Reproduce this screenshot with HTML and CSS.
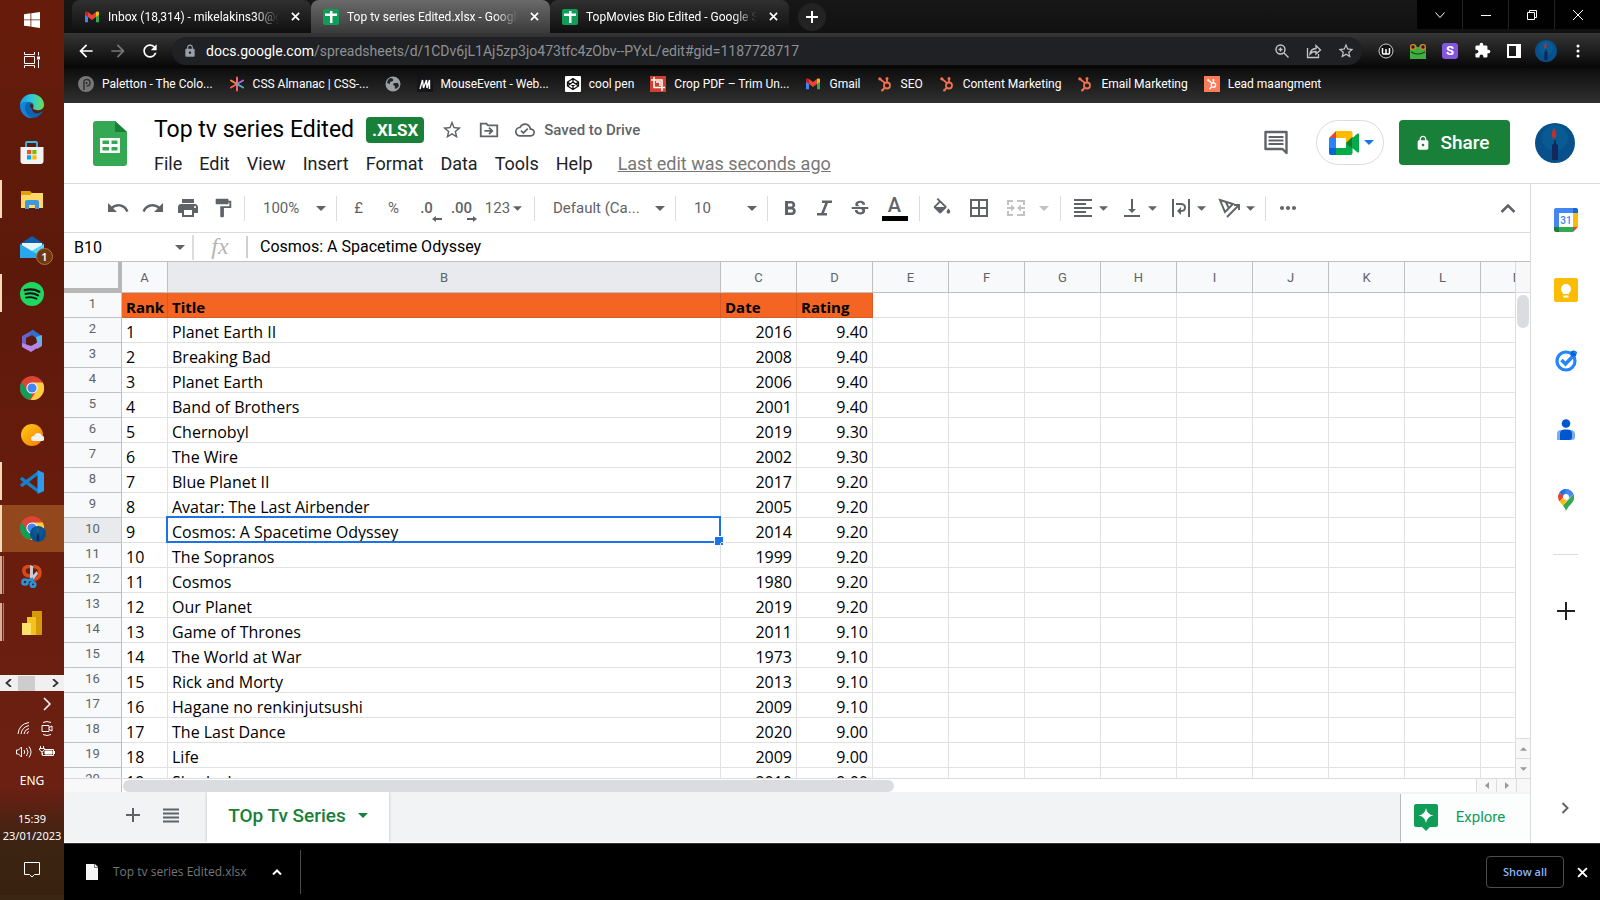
FILE: index.html
```html
<!DOCTYPE html>
<html lang="en">
<head>
<meta charset="utf-8">
<title>Top tv series Edited.xlsx - Google Sheets</title>
<link rel="stylesheet" href="styles.css">
</head>
<body>
<svg class="defs" aria-hidden="true">
  <defs>
    <symbol id="i-gmail" viewBox="0 0 16 16"><path fill="#4285f4" d="M1 4v9.2h3V7.5z"/><path fill="#34a853" d="M12 7.5v5.7h3V4z"/><path fill="#c5221f" d="M1 3.8C1 2.4 2.6 2 3.6 2.8L4 3.1v5L1 5.8z"/><path fill="#ea4335" d="M4 3.1l4 3 4-3v5l-4 3-4-3z"/><path fill="#fbbc04" d="M12 3.1l.4-.3C13.400 2 15 2.400 15 3.800v2L12 8.100z"/></symbol>
    <symbol id="i-sheet" viewBox="0 0 16 16"><rect width="16" height="16" rx="2" fill="#0f9d58"/><path fill="#fff" d="M2 4.500h5V2h2.500v2.500H14V7H9.500v7H7V7H2z"/></symbol>
    <symbol id="i-hub" viewBox="0 0 16 16"><g fill="none" stroke="currentColor" stroke-width="1.800"><circle cx="10" cy="9.500" r="3"/><path d="M10 6.500V2.500M8 7L3 3M8 11.500L5.500 14"/></g><g fill="currentColor"><circle cx="10" cy="2.500" r="1.500"/><circle cx="2.800" cy="2.800" r="1.600"/><circle cx="5.300" cy="14.200" r="1.200"/></g></symbol>
    <symbol id="i-caret" viewBox="0 0 10 5"><path fill="currentColor" d="M0 0h10L5 5z"/></symbol>
    <symbol id="i-x" viewBox="0 0 10 10"><path fill="none" stroke="currentColor" stroke-width="1.800" d="M1 1l8 8M9 1L1 9"/></symbol>
    <symbol id="i-avatar" viewBox="0 0 40 40"><circle cx="20" cy="20" r="20" fill="#07508c"/><circle cx="20" cy="15" r="13" fill="#0a6499" opacity=".5"/><path fill="#12275a" d="M17 22q3-3 6 0v15h-6z"/><path stroke="#0b1526" stroke-width="1" d="M20 17v4"/><path fill="#c22d2d" d="M19 5q-4 6-1 11 4-1 3-5 0-4-2-6z"/></symbol>
    <symbol id="i-chrome" viewBox="0 0 24 24"><circle cx="12" cy="12" r="12" fill="#db4437"/><path fill="#0f9d58" d="M1.600 6L7.200 15 12 18l-2 5.800A12 12 0 0 1 1.600 6z"/><path fill="#ffcd40" d="M12 6.500h10.700A12 12 0 0 1 10.500 24L17 14z"/><circle cx="12" cy="12" r="5.600" fill="#fff"/><circle cx="12" cy="12" r="4.600" fill="#4285f4"/></symbol>
    <symbol id="i-star" viewBox="0 0 24 24"><path fill="currentColor" d="M22 9.240l-7.190-.62L12 2 9.190 8.630 2 9.240l5.460 4.730L5.820 21 12 17.270 18.180 21l-1.630-7.030L22 9.240zM12 15.400l-3.760 2.270 1-4.280-3.320-2.880 4.380-.38L12 6.100l1.710 4.040 4.380.38-3.320 2.880 1 4.280L12 15.400z"/></symbol>
    <symbol id="i-lock" viewBox="0 0 24 24"><path fill="currentColor" d="M18 8h-1V6c0-2.760-2.240-5-5-5S7 3.240 7 6v2H6c-1.100 0-2 .9-2 2v10c0 1.100.9 2 2 2h12c1.100 0 2-.9 2-2V10c0-1.100-.9-2-2-2zm-6 9c-1.100 0-2-.9-2-2s.9-2 2-2 2 .9 2 2-.9 2-2 2zm3.100-9H8.900V6c0-1.710 1.390-3.100 3.100-3.100s3.100 1.390 3.100 3.100v2z"/></symbol>
  </defs>
</svg>

<div class="desktop">
  <aside class="taskbar">
    <button class="task start" aria-label="Start"><svg width="16" height="16" viewBox="0 0 16 16"><path fill="#fff" d="M0 2.200L6.500 1.300v6.200H0zM7.300 1.200L16 0v7.500H7.300zM0 8.300h6.500v6.200L0 13.700zM7.300 8.300H16V16l-8.700-1.200z"/></svg></button>
    <button class="task view" aria-label="Task view"><svg width="16" height="16" viewBox="0 0 16 16"><path fill="none" stroke="#fff" d="M.5 0v2.500h10V0M.5 16v-2.500h10V16M.5 4.500h10v7H.5zM14.500 0v3.500M14.500 8v8"/><path fill="#fff" d="M13 4.500h3v3h-3z"/></svg></button>
    <button class="task" aria-label="Edge"><svg width="24" height="24" viewBox="0 0 24 24"><defs><linearGradient id="e1" x1="0" x2="1"><stop offset="0" stop-color="#1b9de2"/><stop offset=".5" stop-color="#30c8d8"/><stop offset="1" stop-color="#6be04c"/></linearGradient></defs><circle cx="12" cy="12" r="12" fill="#0c64b4"/><path fill="url(#e1)" d="M0 11C1 4 6 0 12 0c7 0 12 5 12 11 0 4-3 6-7 6-3 0-5-1-4-3 2-4-1-6-4-6-4 0-7 1-9 3z"/><path fill="#1584d6" d="M0 11c2-3 5-4 8-3-3 2-4 6-2 10 1 3 3 5 7 6C6 25 0 19 0 11z"/><path fill="#5a1b0c" d="M12 15c0 3 3 5 7 4l4-2q1-2 1-5c-1 4-5 5-8 4-2-.5-3-1-3-2 1-2 0-4-2-4-2 1-1 3 1 5z"/></svg></button>
    <button class="task" aria-label="Microsoft Store"><svg width="24" height="24" viewBox="0 0 24 24"><path fill="none" stroke="#35bde8" stroke-width="1.800" d="M6 6V2q0-1 1-1h9q1 0 1 1v4"/><path fill="#f2f2f2" d="M.5 6h23v14q0 3-3 3h-17q-3 0-3-3z"/><path fill="#f25022" d="M7 9h4.200v4.200H7z"/><path fill="#7fba00" d="M12.300 9h4.200v4.200h-4.200z"/><path fill="#00a4ef" d="M7 14.300h4.200v4.200H7z"/><path fill="#ffb900" d="M12.300 14.300h4.200v4.200h-4.200z"/></svg></button>
    <button class="task open" aria-label="File Explorer"><svg width="22" height="20" viewBox="0 0 22 20"><path fill="#e0a010" d="M0 1h9l2 2h11v4H0z"/><path fill="#ffd867" d="M0 5h9l2-2h11v15H0z"/><path fill="#3f97dc" d="M4 19v-7q0-2 2-2h10q2 0 2 2v7h-4v-4H8v4z"/></svg></button>
    <button class="task" aria-label="Mail, 1 new"><svg width="24" height="22" viewBox="0 0 24 22"><path fill="#0d5fb0" d="M0 8l12-8 12 8v4H0z"/><path fill="#e8f4fb" d="M2 7h20v8H2z"/><path fill="#28a8ea" d="M0 8l12 7 12-7v14H0z"/><path fill="#50d9ff" d="M24 8v14L9 13.500l3 1.500z"/></svg><span class="badge">1</span></button>
    <button class="task open" aria-label="Spotify"><svg width="24" height="24" viewBox="0 0 24 24"><circle cx="12" cy="12" r="12" fill="#1ed760"/><g fill="none" stroke="#111" stroke-linecap="round"><path stroke-width="2.300" d="M4.800 8.200q8-2 14.500 1.500"/><path stroke-width="2" d="M5.500 12q7-1.800 12.500 1.400"/><path stroke-width="1.700" d="M6 15.600q6-1.400 10.500 1.200"/></g></svg></button>
    <button class="task" aria-label="Microsoft 365"><svg width="22" height="24" viewBox="0 0 22 24"><path fill="#6a62cf" d="M12 1L1 7v11l4-2V9l10-5z"/><path fill="#2f6fd0" d="M12 1l9 6v4l-6-2-4-3-3 1 2-5z"/><path fill="#52b8ee" d="M15 8l6-2v11l-5 3v-7z"/><path fill="#b387e8" d="M1 14l9 3 7-4 4 3-11 7-9-5z"/><path fill="#5a1b0c" d="M11 8l4 2.500v3.500L11 16l-3-2v-4z"/></svg></button>
    <button class="task" aria-label="Chrome"><svg width="24" height="24"><use href="#i-chrome"/></svg></button>
    <button class="task" aria-label="Weather"><svg width="24" height="24" viewBox="0 0 24 24"><defs><linearGradient id="w1" x2="1" y2="1"><stop stop-color="#ffca18"/><stop offset="1" stop-color="#f57c00"/></linearGradient></defs><circle cx="12" cy="12" r="11" fill="url(#w1)"/><path fill="#eef1f5" d="M14 18q-3 0-3-2.500t3-2.500q1-3 4-3t4 3q3 .5 3 2.500T22 18z"/></svg></button>
    <button class="task open" aria-label="Visual Studio Code"><svg width="24" height="24" viewBox="0 0 24 24"><path fill="none" stroke="#1580cc" stroke-width="3.400" d="M1 8l17 13M1 16L18 3"/><path fill="#2a9df0" d="M17.500 0L24 3v18l-6.500 3z"/></svg></button>
    <button class="task open active" aria-label="Chrome, current profile"><svg width="28" height="28" viewBox="0 0 28 28"><svg width="24" height="24" x="2" y="1"><use href="#i-chrome"/></svg><svg width="16" height="16" x="12" y="11"><use href="#i-avatar"/></svg></svg></button>
    <button class="task open multi" aria-label="Snip"><svg width="22" height="24" viewBox="0 0 22 24"><path fill="none" stroke="#d84a1b" stroke-width="3.500" d="M9 2.500Q2 2 3 8q1 4 7 4M12 2.500q7 0 7 6t-6 7"/><path fill="#c9cdd2" d="M9 1l3 1v9l4-4 1 3-5 6-3-1z"/><g fill="none" stroke="#2795e0" stroke-width="2.500"><circle cx="4" cy="18" r="2.600"/><circle cx="12" cy="20.500" r="2.300"/><path d="M6 17l5-2 1 3"/></g></svg></button>
    <button class="task open multi" aria-label="Power BI"><svg width="20" height="24" viewBox="0 0 20 24"><path fill="#d69a08" d="M10 0h10v24H10z"/><path fill="#f2c21f" d="M5 6h9v18H5z"/><path fill="#fbe06a" d="M0 12h9v12H0z"/></svg></button>
    <div class="task-scroll"><svg width="7" height="8" viewBox="0 0 7 8"><path fill="none" stroke="#333" stroke-width="1.800" d="M6 0L1.500 4 6 8"/></svg><i></i><svg width="7" height="8" viewBox="0 0 7 8"><path fill="none" stroke="#333" stroke-width="1.800" d="M1 0l4.500 4L1 8"/></svg></div>
    <div class="tray">
      <svg width="16" height="16" viewBox="0 0 16 16" class="tray-more"><path d="M5 2l6 6-6 6"/></svg>
      <svg width="16" height="16" viewBox="0 0 16 16"><path d="M2 14Q3 4 13 2.500M5 14q1-7 8-8.500M8 14q.5-4.500 5-5.500M11 14q0-2 2-2.500"/></svg>
      <svg width="16" height="16" viewBox="0 0 16 16"><path d="M3 5.500h7v6H3zM10 7.500l3-1.500v5l-3-1.500M4 2.500q4-2 8 0M4 14.500q4 2 8 0"/></svg>
      <svg width="16" height="16" viewBox="0 0 16 16"><path d="M.5 6h2l3-3v10l-3-3h-2zM8 6q1.500 2 0 4M10.500 4q3 4 0 8M13 2.500q4 5.500 0 11"/></svg>
      <svg width="16" height="16" viewBox="0 0 16 16"><path d="M5.500 5.500h9v6h-11V9M15.500 7v3M1.500 2v2M4.500 2v2M.5 4.500h5V6L3 8 .5 6zM3 8v3"/><path d="M6 7h7v3H6z" fill="#fff"/></svg>
    </div>
    <div class="lang">ENG</div>
    <div class="clock">15:39<br>23/01/2023</div>
    <button class="notes" aria-label="Notifications"><svg width="16" height="16" viewBox="0 0 16 16"><path fill="none" stroke="#fff" d="M.5.500h15v12h-5L8 15l-2.500-2.500h-5z"/></svg></button>
  </aside>

  <main class="window">
    <header class="tabstrip">
      <div class="tab"><svg width="16" height="16"><use href="#i-gmail"/></svg><span>Inbox (18,314) - mikelakins30@g</span><button aria-label="Close tab"><svg width="9" height="9"><use href="#i-x"/></svg></button></div>
      <div class="tab current"><svg width="16" height="16"><use href="#i-sheet"/></svg><span>Top tv series Edited.xlsx - Google</span><button aria-label="Close tab"><svg width="9" height="9"><use href="#i-x"/></svg></button></div>
      <div class="tab"><svg width="16" height="16"><use href="#i-sheet"/></svg><span>TopMovies Bio Edited - Google S</span><button aria-label="Close tab"><svg width="9" height="9"><use href="#i-x"/></svg></button></div>
      <button class="newtab" aria-label="New tab"><svg width="12" height="12" viewBox="0 0 12 12"><path stroke="#fff" stroke-width="2" d="M6 0v12M0 6h12"/></svg></button>
      <div class="winbtns">
        <button aria-label="Search tabs"><svg width="10" height="10" viewBox="0 0 10 10"><path d="M.5 2.500L5 7.500l4.500-5"/></svg></button>
        <button aria-label="Minimise"><svg width="10" height="10" viewBox="0 0 10 10"><path d="M0 5.500h10"/></svg></button>
        <button aria-label="Restore"><svg width="10" height="10" viewBox="0 0 10 10"><path d="M.5 2.500h7v7h-7zM2.500 2.500v-2h7v7h-2"/></svg></button>
        <button aria-label="Close"><svg width="10" height="10" viewBox="0 0 10 10"><path d="M0 0l10 10M10 0L0 10"/></svg></button>
      </div>
    </header>

    <div class="navbar">
      <button aria-label="Back"><svg width="20" height="20" viewBox="0 0 24 24"><path fill="#fff" d="M20 11H7.830l5.590-5.590L12 4l-8 8 8 8 1.410-1.410L7.830 13H20v-2z"/></svg></button>
      <button aria-label="Forward"><svg width="20" height="20" viewBox="0 0 24 24"><path fill="#777" d="M4 11h12.170l-5.590-5.590L12 4l8 8-8 8-1.410-1.410L16.170 13H4v-2z"/></svg></button>
      <button aria-label="Reload"><svg width="20" height="20" viewBox="0 0 24 24"><path fill="#fff" d="M17.650 6.350C16.200 4.900 14.210 4 12 4c-4.420 0-7.990 3.580-7.990 8s3.570 8 7.990 8c3.730 0 6.840-2.550 7.730-6h-2.080c-.82 2.330-3.040 4-5.650 4-3.310 0-6-2.690-6-6s2.690-6 6-6c1.660 0 3.140.69 4.220 1.780L13 11h7V4l-2.350 2.350z"/></svg></button>
      <div class="omnibox">
        <svg class="dim" width="14" height="14"><use href="#i-lock"/></svg>
        <span class="url"><b>docs.google.com</b>/spreadsheets/d/1CDv6jL1Aj5zp3jo473tfc4zObv--PYxL/edit#gid=1187728717</span>
        <button aria-label="Zoom"><svg width="16" height="16" viewBox="0 0 16 16"><g fill="none" stroke="#c4c7cb" stroke-width="1.400"><circle cx="6.500" cy="6.500" r="4.500"/><path d="M10 10l4.500 4.500M4.500 6.500h4M6.500 4.500v4"/></g></svg></button>
        <button aria-label="Share"><svg width="16" height="16" viewBox="0 0 16 16"><g fill="none" stroke="#c4c7cb" stroke-width="1.300"><path d="M1.500 5v9.500h11V11M4 11q.5-5 6-5.500V2.500L14.500 7 10 11V8.500q-4 0-6 2.500z"/></g></svg></button>
        <button aria-label="Bookmark"><svg width="18" height="18" class="pale"><use href="#i-star"/></svg></button>
      </div>
      <div class="exts">
        <button aria-label="Wordtune"><svg width="16" height="16" viewBox="0 0 16 16"><circle cx="8" cy="8" r="7" fill="#111" stroke="#ccc"/><path fill="none" stroke="#fff" stroke-width="1.500" d="M4.500 5v5q0 1 1 1H7q1 0 1-1V6v4q0 1 1 1h1.500q1 0 1-1V5"/></svg></button>
        <button aria-label="Frog"><svg width="18" height="16" viewBox="0 0 18 16"><path fill="#3fae3f" d="M1 5q0-3 3-4 3 0 4 3h2q1-3 4-3 3 1 3 4v11H1z"/><circle cx="4" cy="4" r="3" fill="#e57f2b"/><circle cx="14" cy="4" r="3" fill="#e57f2b"/><circle cx="4" cy="4" r="1.700" fill="#3a1410"/><circle cx="14" cy="4" r="1.700" fill="#3a1410"/><path fill="none" stroke="#17401c" stroke-width="1.200" d="M2 9q7 4 14 0"/></svg></button>
        <button aria-label="Stylus"><span class="ext-s">S</span></button>
        <button aria-label="Extensions"><svg width="17" height="17" viewBox="0 0 24 24"><path fill="#fff" d="M20.500 11H19V7c0-1.100-.9-2-2-2h-4V3.500C13 2.120 11.880 1 10.500 1S8 2.120 8 3.500V5H4c-1.100 0-1.990.9-1.990 2v3.800H3.500c1.490 0 2.700 1.210 2.700 2.700s-1.210 2.700-2.700 2.700H2V20c0 1.100.9 2 2 2h3.800v-1.500c0-1.490 1.210-2.700 2.700-2.700s2.700 1.210 2.700 2.700V22H17c1.100 0 2-.9 2-2v-4h1.500c1.380 0 2.500-1.120 2.500-2.500S21.880 11 20.500 11z"/></svg></button>
        <button aria-label="Side panel"><svg width="14" height="14" viewBox="0 0 14 14"><path fill="#fff" fill-rule="evenodd" d="M0 0h14v14H0zM2 2v10h7V2z"/></svg></button>
        <button aria-label="Profile"><svg width="22" height="22"><use href="#i-avatar"/></svg></button>
        <button aria-label="Menu"><svg width="16" height="16" viewBox="0 0 16 16" fill="#fff"><circle cx="8" cy="3" r="1.500"/><circle cx="8" cy="8" r="1.500"/><circle cx="8" cy="13" r="1.500"/></svg></button>
      </div>
    </div>

    <nav class="bookmarks">
      <a href="#"><svg width="16" height="16" viewBox="0 0 16 16"><circle cx="8" cy="8" r="8" fill="#777"/><path fill="none" stroke="#333" stroke-width="1.500" d="M6 14V8q-1-4 2.500-4.500T12 7q0 3-3.500 3"/><circle cx="8.500" cy="7" r="1" fill="#222"/></svg>Paletton - The Colo...</a>
      <a href="#"><svg width="16" height="16" viewBox="0 0 16 16"><g stroke-width="2" stroke-linecap="round"><path stroke="#f0626c" d="M8 1.500v13"/><path stroke="#ff8a3d" d="M2 4.500L8 8"/><path stroke="#b06ad8" d="M14 4.500L8 8"/><path stroke="#ff5c5c" d="M2 11.500L8 8"/><path stroke="#4cb5c9" d="M14 11.500L8 8"/></g></svg>CSS Almanac | CSS-...</a>
      <a href="#" aria-label="Site"><svg width="16" height="16" viewBox="0 0 16 16"><circle cx="8" cy="8" r="7.500" fill="#9aa0a6"/><path fill="#222" d="M5 2q4 0 3 3l-3 1v2l-3-1Q2 4 5 2zM9 7h4l1 3-3 3q-2-1-1-3l-2-1z"/></svg></a>
      <a href="#"><svg width="16" height="16" viewBox="0 0 16 16"><path fill="#15141a" d="M0 0h16v16H0z"/><path fill="none" stroke="#fff" stroke-width="1.400" d="M3 13L5.500 4l1 8L9.500 4l.5 8 2.500-8v9"/></svg>MouseEvent - Web...</a>
      <a href="#"><svg width="16" height="16" viewBox="0 0 16 16"><rect width="16" height="16" rx="1" fill="#fff"/><path fill="none" stroke="#111" stroke-width="1.300" d="M8 2.500l5.500 3.500v4L8 13.500 2.500 10V6zM2.500 6L8 10l5.500-4M2.500 10L8 6l5.500 4M8 2.500V6M8 10v3.500"/></svg>cool pen</a>
      <a href="#"><svg width="16" height="16" viewBox="0 0 16 16"><path fill="#d1402f" d="M0 0h16v16H0z"/><path fill="none" stroke="#fff" stroke-width="1.500" d="M4 1v10.500h7.500M1 4h11v11M13 11.500h2M6 6h4v4"/></svg>Crop PDF – Trim Un...</a>
      <a href="#"><svg width="16" height="16"><use href="#i-gmail"/></svg>Gmail</a>
      <a href="#"><svg class="hub" width="16" height="16"><use href="#i-hub"/></svg>SEO</a>
      <a href="#"><svg class="hub" width="16" height="16"><use href="#i-hub"/></svg>Content Marketing</a>
      <a href="#"><svg class="hub" width="16" height="16"><use href="#i-hub"/></svg>Email Marketing</a>
      <a href="#"><svg class="hub-box" width="16" height="16" viewBox="-3 -3 22 22"><use href="#i-hub" width="16" height="16"/></svg>Lead maangment</a>
    </nav>

    <div class="app">
      <header class="dochead">
        <svg class="logo" width="34" height="45" viewBox="0 0 34 45"><path fill="#34a853" d="M3 0h19l12 11v31q0 3-3 3H3q-3 0-3-3V3q0-3 3-3z"/><path fill="#188038" d="M22 0l12 11H22z"/><path fill="#fff" fill-rule="evenodd" d="M7 17h20v15H7zM9.500 19.500v3.500H16v-3.500zM18.500 19.500v3.500h6v-3.500zM9.500 26v3.500H16V26zM18.500 26v3.500h6V26z"/></svg>
        <div class="docinfo">
          <div class="titlerow">
            <h1>Top tv series Edited</h1><span class="xlsx">.XLSX</span>
            <button aria-label="Star"><svg width="22" height="22"><use href="#i-star"/></svg></button>
            <button aria-label="Move"><svg width="22" height="22" viewBox="0 0 24 24"><path fill="none" stroke="currentColor" stroke-width="2" d="M3 5h6l2 2h10v12H3zM7 13h8M12 9.500l3.500 3.500-3.500 3.500"/></svg></button>
            <button class="saved"><svg width="20" height="20" viewBox="0 0 24 24"><path fill="currentColor" d="M19.350 10.040C18.670 6.590 15.640 4 12 4 9.110 4 6.600 5.640 5.350 8.040 2.340 8.360 0 10.910 0 14c0 3.310 2.690 6 6 6h13c2.760 0 5-2.240 5-5 0-2.640-2.050-4.780-4.650-4.960zM19 18H6c-2.210 0-4-1.790-4-4 0-2.050 1.530-3.760 3.560-3.970l1.070-.11.5-.95C8.080 7.140 9.940 6 12 6c2.620 0 4.880 1.860 5.390 4.430l.3 1.500 1.530.11c1.560.1 2.780 1.410 2.780 2.960 0 1.650-1.350 3-3 3zm-9-3.820l-2.090-2.090L6.500 13.500 10 17l6.010-6.010-1.410-1.410z"/></svg>Saved to Drive</button>
          </div>
          <nav class="menus"><button>File</button><button>Edit</button><button>View</button><button>Insert</button><button>Format</button><button>Data</button><button>Tools</button><button>Help</button><a href="#">Last edit was seconds ago</a></nav>
        </div>
        <div class="actions">
          <button class="comments" aria-label="Comments"><svg width="26" height="26" viewBox="0 0 26 26"><path fill="none" stroke="currentColor" stroke-width="2.400" stroke-linejoin="round" d="M2.500 2h21v21l-4-4h-17z"/><path stroke="currentColor" stroke-width="2" d="M5.500 7h15M5.500 10.500h15M5.500 14h15"/></svg></button>
          <button class="meet" aria-label="Join a call"><svg width="30" height="24" viewBox="0 0 30 24"><path fill="#ea4335" d="M7 0v7H0z"/><path fill="#ffba00" d="M7 0h14.500q2 0 2 2v6L17 12V7H7z"/><path fill="#2684fc" d="M0 7h7v10H0z"/><path fill="#0066da" d="M0 17h7v7H2q-2 0-2-2z"/><path fill="#00ac47" d="M7 17h10v-5l6.500-6V22q0 2-2 2H7z"/><path fill="#00ac47" d="M23.500 7l5-4.500q1.500-.5 1.500 1v17q0 1.500-1.500 1l-5-4.500z"/><path fill="#00832d" d="M17 12l6.500-6v12z"/></svg><svg class="meet-caret" width="10" height="5"><use href="#i-caret"/></svg></button>
          <button class="share"><svg width="16" height="16"><use href="#i-lock"/></svg>Share</button>
          <button class="account" aria-label="Account"><svg width="40" height="40"><use href="#i-avatar"/></svg></button>
        </div>
      </header>

      <div class="workspace">
        <section class="editor">
          <div class="toolbar">
            <div class="group">
              <button aria-label="Undo"><svg width="24" height="24" viewBox="0 0 24 24"><path d="M12.500 8c-2.650 0-5.050.99-6.900 2.600L2 7v9h9l-3.620-3.620c1.390-1.160 3.160-1.880 5.120-1.880 3.540 0 6.550 2.310 7.600 5.500l2.370-.78C21.080 11.030 17.150 8 12.500 8z"/></svg></button>
              <button aria-label="Redo"><svg width="24" height="24" viewBox="0 0 24 24"><path d="M18.400 10.600C16.550 8.990 14.150 8 11.500 8c-4.650 0-8.580 3.030-9.960 7.220L3.900 16c1.050-3.190 4.050-5.500 7.600-5.500 1.950 0 3.730.72 5.120 1.880L13 16h9V7l-3.600 3.600z"/></svg></button>
              <button aria-label="Print"><svg width="24" height="24" viewBox="0 0 24 24"><path d="M19 8H5c-1.660 0-3 1.340-3 3v6h4v4h12v-4h4v-6c0-1.660-1.340-3-3-3zm-3 11H8v-5h8v5zm3-7c-.55 0-1-.45-1-1s.45-1 1-1 1 .45 1 1-.45 1-1 1zm-1-9H6v4h12V3z"/></svg></button>
              <button aria-label="Paint format"><svg width="22" height="22" viewBox="0 0 24 24"><path d="M18 4V3c0-.55-.45-1-1-1H5c-.55 0-1 .45-1 1v4c0 .55.450 1 1 1h12c.55 0 1-.45 1-1V6h1v4H9v11c0 .55.450 1 1 1h2c.55 0 1-.45 1-1v-9h8V4h-3z"/></svg></button>
            </div>
            <div class="group"><button class="drop zoom">100%<svg width="10" height="5"><use href="#i-caret"/></svg></button></div>
            <div class="group">
              <button>£</button><button>%</button>
              <button aria-label="Decrease decimals" class="dec">.0<svg width="10" height="6" viewBox="0 0 10 6"><path d="M0 3l4-3v2h6v2H4v2z"/></svg></button>
              <button aria-label="Increase decimals" class="dec">.00<svg width="10" height="6" viewBox="0 0 10 6"><path d="M10 3L6 0v2H0v2h6v2z"/></svg></button>
              <button class="pair num-format">123<svg width="9" height="5"><use href="#i-caret"/></svg></button>
            </div>
            <div class="group"><button class="drop font">Default (Ca...<svg width="10" height="5"><use href="#i-caret"/></svg></button></div>
            <div class="group"><button class="drop zoom">10<svg width="10" height="5"><use href="#i-caret"/></svg></button></div>
            <div class="group wide">
              <button aria-label="Bold"><svg width="24" height="24" viewBox="0 0 24 24"><path d="M15.600 11.790c.97-.67 1.650-1.770 1.650-2.790 0-2.260-1.750-4-4-4H7v14h7.040c2.090 0 3.710-1.700 3.710-3.790 0-1.520-.86-2.820-2.150-3.420zM10 7.500h3c.83 0 1.500.67 1.500 1.500s-.67 1.500-1.500 1.500h-3v-3zm3.500 9H10v-3h3.500c.83 0 1.500.67 1.500 1.500s-.67 1.500-1.500 1.500z"/></svg></button>
              <button aria-label="Italic"><svg width="24" height="24" viewBox="0 0 24 24"><path d="M9 4.500V7h3.200l-4 10H4v2.500h10V17h-3l4-10h4V4.500z"/></svg></button>
              <button aria-label="Strikethrough"><svg width="22" height="22" viewBox="0 0 24 24"><path d="M6.850 8.080C6.850 5.370 9.450 4 12.240 4c1.640 0 3 .49 3.900 1.280.77.65 1.460 1.730 1.460 3.240h-3.010c0-.31-.05-.59-.15-.85-.29-.86-1.200-1.280-2.250-1.280-1.860 0-2.340 1.020-2.340 1.700 0 .48.250.88.740 1.210.38.250.77.480 1.410.700H7.390c-.21-.34-.54-.89-.54-1.920zM21 13v-2H3v2h9.620c1.150.45 1.960.75 1.960 1.970 0 1-.81 1.670-2.280 1.670-1.540 0-2.930-.54-2.930-2.510H6.400c0 .55.080 1.130.240 1.580.81 2.290 3.290 3.300 5.670 3.300 2.270 0 5.300-.89 5.300-4.050 0-.3-.01-1.160-.48-1.940H21V13z"/></svg></button>
              <button class="textcolor" aria-label="Text colour"><span>A</span></button>
            </div>
            <div class="group fill">
              <button aria-label="Fill colour"><svg width="22" height="22" viewBox="0 0 24 24"><path d="M16.560 9.940L7.620 1 6.210 2.410l2.380 2.380-5.150 5.150c-.59.59-.59 1.540 0 2.120l5.500 5.500c.29.290.68.440 1.060.440s.77-.15 1.060-.44l5.500-5.500c.59-.58.59-1.530 0-2.120zM5.210 11L10 6.210 14.790 11H5.210zM19 12.500s-2 2.170-2 3.500c0 1.100.9 2 2 2s2-.9 2-2c0-1.330-2-3.500-2-3.500z"/></svg></button>
              <button aria-label="Borders"><svg width="24" height="24" viewBox="0 0 24 24"><path d="M3 3v18h18V3H3zm8 16H5v-6h6v6zm0-8H5V5h6v6zm8 8h-6v-6h6v6zm0-8h-6V5h6v6z"/></svg></button>
              <button class="off" aria-label="Merge cells"><svg width="24" height="24" viewBox="0 0 24 24"><path d="M3 4h6v2H5v3H3zM21 4h-8v2h6v3h2zM3 20h6v-2H5v-3H3zM21 20h-8v-2h6v-3h2zM3 11h4V8.500l4 3.500-4 3.500V13H3zM21 11h-4V8.500L13 12l4 3.500V13h4z"/></svg></button>
              <button class="off thin" aria-label="Merge type"><svg width="10" height="5"><use href="#i-caret"/></svg></button>
            </div>
            <div class="group pairs">
              <button class="pair" aria-label="Horizontal align"><svg width="24" height="24" viewBox="0 0 24 24"><path d="M15 15H3v2h12v-2zm0-8H3v2h12V7zM3 13h18v-2H3v2zm0 8h18v-2H3v2zM3 3v2h18V3H3z"/></svg><svg width="9" height="5"><use href="#i-caret"/></svg></button>
              <button class="pair" aria-label="Vertical align"><svg width="24" height="24" viewBox="0 0 24 24"><path d="M16 13h-3V3h-2v10H8l4 4 4-4zM4 19v2h16v-2H4z"/></svg><svg width="9" height="5"><use href="#i-caret"/></svg></button>
              <button class="pair" aria-label="Text wrapping"><svg width="24" height="24" viewBox="0 0 24 24"><path d="M3 3h2v18H3zM19 3h2v18h-2zM7 7h5.500q4.500.5 4.500 4.500t-4.500 4.500H12v3l-4-4 4-4v3h.5q2.500 0 2.500-2.500T12.500 9H7z"/></svg><svg width="9" height="5"><use href="#i-caret"/></svg></button>
              <button class="pair" aria-label="Text rotation"><svg width="24" height="24" viewBox="0 0 24 24"><path fill="none" stroke="currentColor" stroke-width="1.900" d="M2 4l13 4-8 8zM7.500 5.500l3 6M9 21L21 9M21 14V9h-5"/></svg><svg width="9" height="5"><use href="#i-caret"/></svg></button>
            </div>
            <div class="group"><button aria-label="More"><svg width="18" height="6" viewBox="0 0 18 6"><circle cx="3" cy="3" r="2"/><circle cx="9" cy="3" r="2"/><circle cx="15" cy="3" r="2"/></svg></button></div>
            <button class="hide" aria-label="Hide menus"><svg width="16" height="10" viewBox="0 0 16 10"><path fill="none" stroke="currentColor" stroke-width="2.500" d="M1.500 9L8 2.500 14.500 9"/></svg></button>
          </div>

          <div class="formula">
            <button class="namebox">B10<svg width="10" height="5"><use href="#i-caret"/></svg></button>
            <span class="fx">fx</span>
            <input type="text" aria-label="Formula" value="Cosmos: A Spacetime Odyssey">
          </div>

          <div class="sheet">
            <div class="grid">
              <table>
                <colgroup id="cols"></colgroup>
                <thead><tr id="letters"></tr></thead>
                <tbody id="rows"></tbody>
              </table>
            </div>
            <div class="vscroll"><i class="corner"></i><i class="thumb"></i><button aria-label="Scroll up"><svg class="flip" width="7" height="4"><use href="#i-caret"/></svg></button><button aria-label="Scroll down"><svg width="7" height="4"><use href="#i-caret"/></svg></button></div>
          </div>
          <div class="hscroll"><div class="track"><i></i></div><button aria-label="Scroll left"><svg width="4" height="7" viewBox="0 0 4 7"><path fill="currentColor" d="M4 0v7L0 3.500z"/></svg></button><button aria-label="Scroll right"><svg width="4" height="7" viewBox="0 0 4 7"><path fill="currentColor" d="M0 0v7l4-3.500z"/></svg></button><span></span></div>

          <footer class="sheetbar">
            <button aria-label="Add sheet"><svg width="14" height="14" viewBox="0 0 14 14"><path stroke="currentColor" stroke-width="2" d="M7 0v14M0 7h14"/></svg></button>
            <button aria-label="All sheets"><svg width="16" height="15" viewBox="0 0 16 15"><path stroke="currentColor" stroke-width="2" d="M0 1.500h16M0 5.500h16M0 9.500h16M0 13.500h16"/></svg></button>
            <button class="sheettab">TOp Tv Series<svg width="10" height="5"><use href="#i-caret"/></svg></button>
            <button class="explore"><svg width="24" height="27" viewBox="0 0 24 27"><path fill="#0f9d58" d="M2 0h20q2 0 2 2v19q0 2-2 2h-6l-4 4-4-4H2q-2 0-2-2V2q0-2 2-2z"/><path fill="#fff" d="M12 4q1 6.500 7.500 7.500Q13 12.500 12 19q-1-6.500-7.500-7.500Q11 10.500 12 4z"/></svg>Explore</button>
          </footer>
        </section>

        <aside class="side">
          <button aria-label="Calendar"><svg width="24" height="24" viewBox="0 0 24 24"><path fill="#4285f4" d="M0 2q0-2 2-2h17v5H5v14H0z"/><path fill="#1967d2" d="M19 0h3q2 0 2 2v3h-5z"/><path fill="#fbbc04" d="M19 5h5v14h-5z"/><path fill="#34a853" d="M5 19h14v5H5z"/><path fill="#188038" d="M0 19h5v5H2q-2 0-2-2z"/><path fill="#ea4335" d="M19 19h5l-5 5z"/><path fill="#fff" d="M5 5h14v14H5z"/><text x="12" y="16" text-anchor="middle">31</text></svg></button>
          <button aria-label="Keep"><svg width="24" height="24" viewBox="0 0 24 24"><rect width="24" height="24" rx="2" fill="#fbbc04"/><circle cx="12" cy="11" r="5" fill="#fff"/><path fill="#fff" d="M9 13h6v3H9zM9.500 17.500h5v2h-5z"/></svg></button>
          <button aria-label="Tasks"><svg width="24" height="24" viewBox="0 0 24 24"><circle cx="12" cy="13" r="9" fill="none" stroke="#2684fc" stroke-width="3.200"/><path fill="none" stroke="#2684fc" stroke-width="3.500" d="M7.500 12l4 4L21 6"/><circle cx="19.500" cy="5.500" r="3" fill="#0066da"/><path stroke="#2684fc" stroke-width="2" d="M20 4l3 1"/></svg></button>
          <button aria-label="Contacts"><svg width="20" height="22" viewBox="0 0 20 22"><circle cx="10" cy="4.500" r="4.300" fill="#0057cc"/><path fill="#7baaf7" d="M1 15q0-4 4-4h9q5 0 5 4v3q0 3-3 3H4q-3 0-3 0z"/><path fill="#0057cc" d="M4 14q1-3.500 4-3.500h4q3 0 4 3.500v4q0 3-3 3H4z"/></svg></button>
          <button aria-label="Maps"><svg width="16" height="22" viewBox="0 0 16 22"><path fill="#34a853" d="M15.500 5q2 5-2 9.500-4 4-5.500 7.500-1-3-3-5.500z"/><path fill="#fbbc04" d="M1.500 12.500L6 8l4 2-5 6.500q-2-2-3.500-4z"/><path fill="#ea4335" d="M1.500 3.500L6.500 7 1.500 12.500Q-1.500 8 1.500 3.500z"/><path fill="#4285f4" d="M1.500 3.500Q4 0 8 0q5 0 7.500 5L10 10 6.500 7z"/><path fill="#1a73e8" d="M1.500 3.500Q4 0 8 0L5.500 6.500z"/><circle cx="8" cy="8" r="3" fill="#fff"/></svg></button>
          <hr>
          <button aria-label="Get add-ons"><svg width="18" height="18" viewBox="0 0 18 18"><path stroke="#202124" stroke-width="2" d="M9 0v18M0 9h18"/></svg></button>
          <button class="collapse" aria-label="Hide side panel"><svg width="9" height="12" viewBox="0 0 9 12"><path fill="none" stroke="#5f6368" stroke-width="2" d="M1.500 1l5 5-5 5"/></svg></button>
        </aside>
      </div>
    </div>

    <footer class="downloads">
      <button class="file"><svg width="12" height="16" viewBox="0 0 12 16"><path fill="#f5f5f5" d="M0 0h9l3 3v13H0z"/><path fill="none" stroke="#777" d="M8.500 0v3.500H12"/></svg><span>Top tv series Edited.xlsx</span></button>
      <button class="up" aria-label="More options"><svg width="10" height="6" viewBox="0 0 10 6"><path fill="none" stroke="#fff" stroke-width="2" d="M1 5.500l4-4 4 4"/></svg></button>
      <button class="showall">Show all</button>
      <button aria-label="Close downloads"><svg class="white" width="11" height="11"><use href="#i-x"/></svg></button>
    </footer>
  </main>
</div>
<script src="grid.js"></script>
</body>
</html>
```
FILE: styles.css
```css
* { box-sizing: border-box; }
body { margin: 0; background: #000; font-family: Roboto, "Liberation Sans", sans-serif; }
button { background: none; border: 0; padding: 0; margin: 0; color: inherit; font: inherit; display: flex; align-items: center; justify-content: center; flex: none; }
a { color: inherit; text-decoration: none; }
svg { flex: none; display: block; }
.defs { position: absolute; width: 0; height: 0; }

.desktop { display: flex; height: 100vh; overflow: hidden; }

/* Windows taskbar */
.taskbar { width: 64px; flex: none; display: flex; flex-direction: column; color: #fff; font-family: "Noto Sans", "Open Sans", sans-serif; font-size: 12px; background: linear-gradient(#671c0b 0, #5c190a 30%, #6a1d0d 60%, #6b2012 88%, #3c2312 94%, #38220f 100%); border-bottom: 5px solid #3b2613; }
.task { height: 47px; width: 64px; position: relative; }
.task.start { height: 40px; }
.task.view { height: 39px; margin-bottom: 3px; }
.task.open::before { content: ""; position: absolute; left: 0; top: 4px; width: 2px; height: 38px; background: #fbd9b5; }
.task.multi::before { width: 4px; background: linear-gradient(90deg, #d8b09a 2px, #6b2a1b 2px, #6b2a1b 3px, #a98070 3px); }
.task.active { background: #92481c; }
.task.active::before { top: 0; height: 47px; }
.badge { position: absolute; left: 36px; top: 25px; width: 17px; height: 17px; border: 1px solid #a9754e; border-radius: 50%; background: #70380d; font-size: 11px; line-height: 15px; font-weight: 600; text-align: center; }
.task-scroll { margin-top: 29px; height: 16px; background: #f0f0f0; display: flex; align-items: center; padding: 0 5px; justify-content: space-between; }
.task-scroll i { width: 17px; height: 15px; background: #cdcdcd; margin-right: 12px; }
.tray { display: grid; grid-template-columns: 16px 16px; column-gap: 7px; row-gap: 8px; justify-content: center; margin-top: 5px; padding-left: 6px; }
.tray svg { fill: none; stroke: #fff; stroke-width: 1; }
.tray .tray-more { grid-column: 2; stroke-width: 1.5; }
.lang { text-align: center; margin-top: 13px; line-height: 16px; }
.clock { text-align: center; margin: 21px -4px 0; line-height: 17px; font-size: 11px; }
.notes { margin: auto 0 17px; }

/* Browser frame */
.window { flex: 1; min-width: 0; display: flex; flex-direction: column; }
.tabstrip { flex: none; height: 33px; padding-left: 8px; display: flex; background: linear-gradient(#c8752a, #c8752a) 616px 0 / 48px 1px no-repeat, linear-gradient(#171717, #111); color: #fff; font: 12px/16px Roboto, sans-serif; }
.tab { width: 239px; display: flex; align-items: center; gap: 8px; padding: 0 8px 0 12px; border-radius: 8px; background: linear-gradient(#303030, #0f0f0f); }
.tab.current { background: linear-gradient(#6a6a6a, #3a3a3a); border-radius: 8px 8px 0 0; }
.tab span { flex: 1; overflow: hidden; white-space: nowrap; mask-image: linear-gradient(90deg, #000 86%, transparent); }
.tab button { width: 16px; height: 16px; }
.newtab { width: 28px; height: 28px; margin: 3px 0 0 9px; border-radius: 50%; background: #232323; }
.winbtns { margin-left: auto; display: flex; gap: 1px; height: 29px; background: #222; }
.winbtns button { width: 45px; background: #010101; }
.winbtns svg { fill: none; stroke: #fff; }

.navbar { flex: none; height: 35px; display: flex; align-items: center; padding: 0 10px 0 12px; background: linear-gradient(#363636, #060606); }
.navbar > button { width: 20px; height: 20px; margin-right: 12px; }
.omnibox { flex: 1; height: 28px; margin: 0 12px 0 0; border-radius: 14px; background: #202124; display: flex; align-items: center; padding: 0 7px 0 11px; gap: 14px; min-width: 0; }
.omnibox button { width: 18px; }
.url { flex: 1; overflow: hidden; white-space: nowrap; color: #8d9196; font: 14px/20px Roboto, sans-serif; margin-left: -5px; }
.url b { font-weight: 400; color: #fff; }
.dim { color: #9aa0a6; }
.pale { color: #c4c7cb; }
.exts { display: flex; gap: 8px; }
.exts button { width: 24px; height: 24px; }
.ext-s { width: 16px; height: 16px; border-radius: 3px; background: #8455e0; color: #fff; font: bold 13px/16px Roboto, sans-serif; }

.bookmarks { flex: none; height: 35px; display: flex; align-items: center; gap: 16px; padding: 0 14px 3px; background: linear-gradient(#0d0d0d, #303030); color: #fff; font: 12px/16px Roboto, sans-serif; overflow: hidden; white-space: nowrap; }
.bookmarks a { display: flex; gap: 8px; align-items: center; }
.hub { color: #f2704f; }
.hub-box { color: #fff; background: #ff7a59; }

/* Document header */
.app { flex: 1; min-height: 0; background: #fff; display: flex; flex-direction: column; }
.dochead { flex: none; height: 81px; padding: 0 25px 0 29px; display: flex; border-bottom: 1px solid #dadce0; }
.logo { margin-top: 18px; }
.docinfo { margin-left: 27px; flex: 1; min-width: 0; white-space: nowrap; }
.titlerow { display: flex; align-items: center; height: 34px; margin-top: 10px; color: #5f6368; }
h1 { margin: 0; font: 400 23px/30px Roboto, sans-serif; color: #000; }
.xlsx { margin: 0 17px 0 12px; height: 26px; padding: 0 6px; border-radius: 4px; background: #188038; color: #fff; font-weight: 700; font-size: 17px; line-height: 26px; }
.titlerow button { margin-right: 15px; }
.titlerow .saved { gap: 9px; font-size: 15px; font-weight: 500; }
.menus { display: flex; gap: 17px; height: 32px; align-items: center; color: #202124; font-size: 18px; }
.menus a { margin-left: 8px; color: #777; text-decoration: underline; }
.actions { display: flex; align-items: center; height: 79px; }
.comments { color: #5f6368; margin-right: 27px; }
.meet { width: 68px; height: 45px; border: 1px solid #dadce0; border-radius: 23px; padding-left: 3px; gap: 5px; margin-right: 15px; }
.meet-caret { color: #1a73e8; }
.share { width: 111px; height: 45px; border-radius: 4px; background: #188038; color: #fff; gap: 9px; font-size: 19px; font-weight: 500; margin-right: 25px; padding-right: 4px; }

.workspace { flex: 1; display: flex; min-height: 0; }
.editor { flex: 1; min-width: 0; display: flex; flex-direction: column; }

/* Toolbar */
.toolbar { flex: none; height: 49px; padding: 0 14px 0 32px; display: flex; align-items: center; border-bottom: 1px solid #dadce0; color: #5f6368; font-size: 15px; }
.toolbar svg { fill: currentColor; }
.group { display: flex; height: 25px; align-items: center; padding: 0 4px; border-left: 1px solid #dadce0; }
.group:first-child { border: 0; }
.group button { width: 35px; height: 34px; }
.group .drop { justify-content: space-between; padding: 0 6px 0 14px; }
.group .zoom { width: 83px; }
.group .font { width: 132px; }
.group .pair { width: 49px; gap: 4px; }
.group .num-format { gap: 3px; padding-right: 4px; }
.group .thin { width: 18px; }
.group.wide { padding-right: 7px; }
.group.fill { gap: 2px; padding-right: 7px; }
.off { color: #c0c2c5; }
.group .dec { position: relative; font-weight: 500; padding-right: 4px; }
.dec svg { position: absolute; right: 4px; bottom: 3px; }
.textcolor span { width: 26px; height: 26px; border-bottom: 5px solid #000; font-size: 20px; line-height: 20px; font-weight: 500; }
.hide { margin-left: auto; }

.formula { flex: none; height: 29px; display: flex; align-items: center; border-bottom: 1px solid #c0c0c0; font-size: 16px; }
.namebox { width: 130px; height: 25px; padding: 0 7px 0 10px; justify-content: space-between; border-right: 2px solid #dadce0; }
.namebox svg { color: #5f6368; }
.fx { width: 54px; height: 22px; border-right: 2px solid #d0d0d0; text-align: center; font: italic 24px/20px "Liberation Serif", serif; color: #b5b5b5; }
.formula input { flex: 1; border: 0; outline: 0; padding: 0 12px; font: 16px/20px Roboto, sans-serif; color: #000; }

/* Cells */
.sheet { flex: 1; min-height: 0; display: flex; }
.grid { flex: 1; min-width: 0; overflow: hidden; }
table { table-layout: fixed; border-collapse: separate; border-spacing: 0; width: 0; }
th, td { padding: 0; height: 25px; border-right: 1px solid #e1e1e1; border-bottom: 1px solid #e1e1e1; white-space: nowrap; }
th { background: #f8f9fa; color: #5f6368; font-weight: 400; font-size: 13px; border-color: #c0c0c0; }
thead th { height: 31px; }
thead th:first-child { border-right: 4px solid #b7b7b7; border-bottom: 5px solid #b7b7b7; }
th.on { background: #e8eaed; }
td { padding: 3px 4px 0; font: 16px/20px "Open Sans", "Noto Sans", sans-serif; color: #000; position: relative; }
tbody th { line-height: 18px; padding-bottom: 2px; }
td.num { text-align: right; }
tr.heading td.filled { background: #f46524; border-color: #d95b21; font-weight: 700; font-size: 15px; }
.selection { position: absolute; inset: -2px -1px -1px -2px; border: 2px solid #1a73e8; }
.selection::after { content: ""; position: absolute; right: -4px; bottom: -4px; width: 8px; height: 8px; background: #1a73e8; border: 1px solid #fff; border-width: 1px 0 0 1px; }

.vscroll { width: 15px; flex: none; border-left: 1px solid #dadce0; display: flex; flex-direction: column; }
.corner { height: 31px; background: #f8f8f8; border-bottom: 1px solid #dadce0; }
.thumb { height: 33px; width: 12px; margin: 2px 1px auto; border-radius: 6px; background: #dadce0; }
.vscroll button { height: 20px; border-top: 1px solid #dadce0; background: #f8f8f8; color: #999; }
.flip { transform: rotate(180deg); }
.hscroll { flex: none; height: 14px; display: flex; border-top: 1px solid #dadce0; padding-left: 57px; background: #f8f8f8; }
.track { flex: 1; border-left: 1px solid #c0c0c0; padding: 1px; background: #fff; }
.track i { display: block; width: 57%; height: 12px; border-radius: 6px; background: #dadce0; }
.hscroll button { width: 20px; border-left: 1px solid #dadce0; color: #999; }
.hscroll span { width: 14px; border-left: 1px solid #dadce0; }

.sheetbar { flex: none; height: 51px; padding-left: 50px; display: flex; background: #f1f3f4; color: #5f6368; border-bottom: 1px solid #fff; }
.sheetbar > button { width: 38px; padding-bottom: 4px; }
.sheetbar .sheettab { margin-left: 17px; width: 182px; padding: 0 0 3px; background: #fff; color: #188038; font-size: 19px; font-weight: 500; gap: 12px; box-shadow: 0 0 3px #bbb; clip-path: inset(0 -4px); }
.sheetbar .explore { margin: 2px 0 0 auto; width: 130px; padding: 0 12px 2px 0; gap: 18px; background: #fcfefd; border-left: 1px solid #b8babd; color: #0f9d58; font-size: 15px; }

/* Side panel */
.side { width: 70px; flex: none; border-left: 1px solid #dadce0; display: flex; flex-direction: column; align-items: center; padding-top: 1px; }
.side button { height: 70px; width: 100%; }
.side text { font: 500 10px Roboto, sans-serif; fill: #4285f4; }
.side hr { width: 25px; height: 1px; margin: 19px 0 21px; border: 0; background: #dadce0; }
.side .collapse { margin-top: auto; }

/* Download shelf */
.downloads { flex: none; height: 57px; background: #000; border-top: 1px solid #333; display: flex; align-items: center; padding-right: 12px; font: 12px/16px "Open Sans", "Noto Sans", sans-serif; }
.file { gap: 15px; padding-left: 22px; color: #74777a; }
.up { width: 51px; height: 44px; margin-left: 3px; border-right: 1px solid #4a4a4a; padding-left: 4px; }
.showall { margin: 0 13px 0 auto; width: 78px; height: 32px; border: 1px solid #4a4c50; border-radius: 4px; color: #8ab4f8; font-weight: 600; font-size: 11px; }
.white { color: #fff; }
```
FILE: grid.js
```js
const letters = "ABCDEFGHIJKLM".split("");
const widths = [58, 46, 553].concat(Array(11).fill(76));
const series = [
  ["Planet Earth II", 2016, "9.40"],
  ["Breaking Bad", 2008, "9.40"],
  ["Planet Earth", 2006, "9.40"],
  ["Band of Brothers", 2001, "9.40"],
  ["Chernobyl", 2019, "9.30"],
  ["The Wire", 2002, "9.30"],
  ["Blue Planet II", 2017, "9.20"],
  ["Avatar: The Last Airbender", 2005, "9.20"],
  ["Cosmos: A Spacetime Odyssey", 2014, "9.20"],
  ["The Sopranos", 1999, "9.20"],
  ["Cosmos", 1980, "9.20"],
  ["Our Planet", 2019, "9.20"],
  ["Game of Thrones", 2011, "9.10"],
  ["The World at War", 1973, "9.10"],
  ["Rick and Morty", 2013, "9.10"],
  ["Hagane no renkinjutsushi", 2009, "9.10"],
  ["The Last Dance", 2020, "9.00"],
  ["Life", 2009, "9.00"],
  ["Sherlock", 2010, "9.00"]
];
const selectedRow = 10;

const make = (tag, text, cls) => {
  const el = document.createElement(tag);
  if (text !== undefined) el.textContent = text;
  if (cls) el.className = cls;
  return el;
};

widths.forEach(w => {
  const col = make("col");
  col.style.width = w + "px";
  document.getElementById("cols").append(col);
});

const head = document.getElementById("letters");
head.append(make("th"));
letters.forEach(l => head.append(make("th", l, l === "B" ? "on" : "")));

const body = document.getElementById("rows");
const table = [["Rank", "Title", "Date", "Rating"]]
  .concat(series.map((s, i) => [i + 1, ...s]));
table.forEach((values, r) => {
  const tr = make("tr", undefined, r === 0 ? "heading" : "");
  tr.append(make("th", r + 1, r + 1 === selectedRow ? "on" : ""));
  letters.forEach((l, c) => {
    const filled = c < values.length;
    const td = make("td", filled ? values[c] : "", r === 0 ? (filled ? "filled" : "") : (c > 1 ? "num" : ""));
    if (r + 1 === selectedRow && c === 1) td.append(make("span", undefined, "selection"));
    tr.append(td);
  });
  body.append(tr);
});
```
